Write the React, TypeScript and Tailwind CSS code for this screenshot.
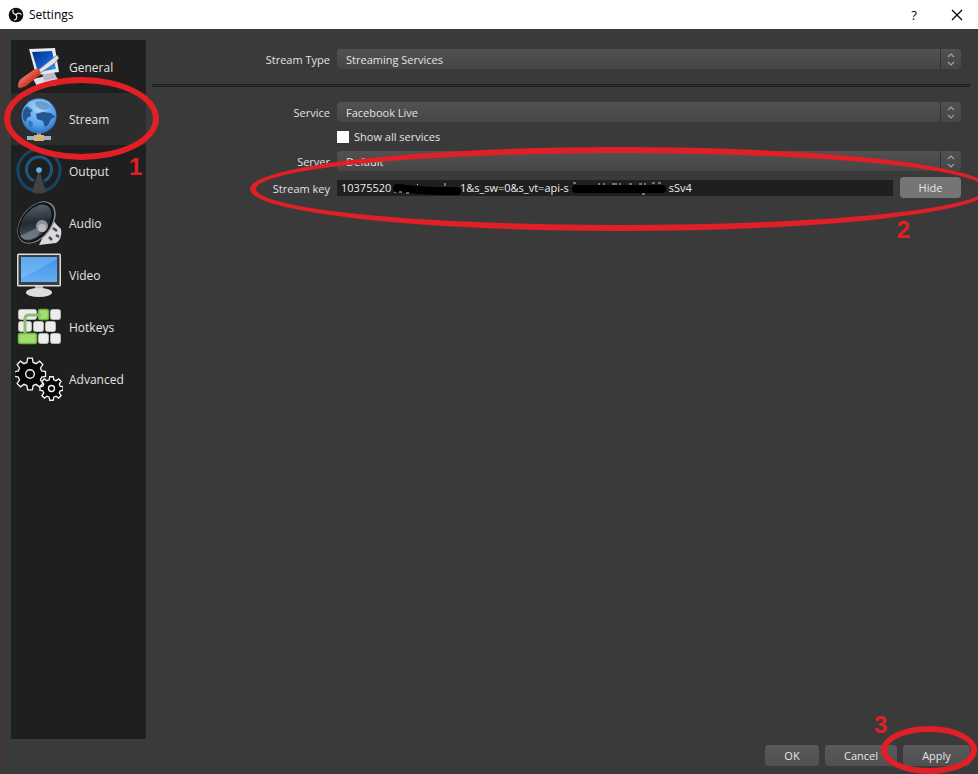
import { useState } from "react";
import type { ReactNode } from "react";

interface NavItem {
  label: string;
  icon: ReactNode;
}

/* Sidebar icons, all drawn on a 48x48 canvas */

function GeneralIcon() {
  return (
    <svg viewBox="0 0 48 48" className="h-12 w-12 shrink-0" aria-hidden="true">
      <defs>
        <linearGradient id="gen-screen" x1="0" y1="0" x2="1" y2="1">
          <stop offset="0" stopColor="#0a2f86" />
          <stop offset="0.5" stopColor="#0d55c8" />
          <stop offset="1" stopColor="#3fa4f5" />
        </linearGradient>
        <linearGradient id="gen-handle" x1="0" y1="0" x2="1" y2="1">
          <stop offset="0.2" stopColor="#f08a74" />
          <stop offset="0.6" stopColor="#cf3a28" />
          <stop offset="1" stopColor="#8f2015" />
        </linearGradient>
      </defs>
      <path d="M18 36l18-4 11 6-8 5H22z" fill="#dcdce2" />
      <path d="M27 30l12-1 3 6-13 3z" fill="#b9bac4" />
      <path d="M14 6l26-1 4 24-23 3z" fill="#e9eaf0" />
      <path d="M17 9l20-1 4 18-18 3z" fill="url(#gen-screen)" />
      <path d="M42 12l2 3-4 5-16 11-2-3 15-12z" fill="#dfe4ea" stroke="#6b7078" strokeWidth="0.8" />
      <path d="M20 26c3-1 7 2 5 6L11 43c-4 2-8 3-8 0 0-3 1-6 4-8z" fill="url(#gen-handle)" />
    </svg>
  );
}

function StreamIcon() {
  return (
    <svg viewBox="0 0 48 48" className="h-12 w-12 shrink-0" aria-hidden="true">
      <defs>
        <radialGradient id="globe" cx="0.5" cy="0.35" r="0.65">
          <stop offset="0" stopColor="#8cc6fa" />
          <stop offset="0.6" stopColor="#5aa7f0" />
          <stop offset="1" stopColor="#2a6fc4" />
        </radialGradient>
      </defs>
      <path d="M22 36h4v6h-4z" fill="#9aa3ad" />
      <path d="M12 41h24v4H12z" fill="#9fb2c2" />
      <path d="M19 40h10v6H19z" fill="#d9b27a" />
      <circle cx="24" cy="21" r="17.500" fill="url(#globe)" />
      <path d="M8 17c1-3 3-5 5-6l5 4-3 3 1 3-4 2-1 4-3-3z" fill="#235591" />
      <path d="M20 7c6-2 13 0 16 5l-5 3-6-1-4-3z" fill="#2f69ad" opacity="0.7" />
      <path d="M21 19l7-2 8 1 4 4-4 2-3 6-3 2-2-6-6-2z" fill="#235591" />
      <path d="M13 25l5 2-1 5-3-1z" fill="#2f69ad" opacity="0.8" />
      <ellipse cx="24" cy="11" rx="12" ry="6" fill="#fff" opacity="0.22" />
    </svg>
  );
}

function OutputIcon() {
  return (
    <svg viewBox="0 0 48 48" className="h-12 w-12 shrink-0" aria-hidden="true">
      <g fill="none" stroke="#164566" strokeWidth="3">
        <path d="M18 43.500A21 21 0 1 1 30 43.500" />
        <path d="M19 34A12.500 12.500 0 1 1 29 34" stroke="#1b5780" />
      </g>
      <path d="M23 25h2l6 20c-4 2-10 2-14 0z" fill="#424242" />
      <circle cx="24" cy="23" r="2.800" fill="#62b5f3" />
    </svg>
  );
}

function AudioIcon() {
  return (
    <svg viewBox="0 0 48 48" className="h-12 w-12 shrink-0" aria-hidden="true">
      <defs>
        <linearGradient id="cone" x1="0.2" y1="0" x2="0.8" y2="1">
          <stop offset="0" stopColor="#5c6873" />
          <stop offset="0.5" stopColor="#232a31" />
          <stop offset="1" stopColor="#56606a" />
        </linearGradient>
      </defs>
      <path d="M37 20l4 5 5 5c1 7-1 12-5 14l-17 2z" fill="#d9dadb" />
      <path d="M38 29l4 3M41 36l3 2M34 38l3 3" stroke="#46494d" strokeWidth="2.500" />
      <ellipse cx="21.500" cy="23.500" rx="15.500" ry="24" transform="rotate(38 21.500 23.500)" fill="#8b9196" />
      <ellipse cx="21" cy="23.500" rx="14.500" ry="23" transform="rotate(38 21 23.500)" fill="#121518" />
      <ellipse cx="20.500" cy="23.500" rx="12.500" ry="20.500" transform="rotate(38 20.500 23.500)" fill="url(#cone)" />
      <path d="M24 28L5 37c3 5 11 4 17 0l4-5z" fill="#8b959e" opacity="0.6" />
      <circle cx="27" cy="27" r="6" fill="#8f9397" />
      <circle cx="27" cy="29" r="4" fill="#b8babc" />
    </svg>
  );
}

function VideoIcon() {
  return (
    <svg viewBox="0 0 48 48" className="h-12 w-12 shrink-0" aria-hidden="true">
      <defs>
        <linearGradient id="vid-screen" x1="0" y1="0" x2="0" y2="1">
          <stop offset="0" stopColor="#3f92e6" />
          <stop offset="1" stopColor="#62aff2" />
        </linearGradient>
      </defs>
      <path d="M20 34h8v7h-8z" fill="#b9b9b9" />
      <ellipse cx="24" cy="41.500" rx="13" ry="4.500" fill="#dedede" />
      <rect x="2" y="2.500" width="44" height="33" rx="1.500" fill="#dcdcdc" />
      <rect x="3.500" y="4" width="41" height="30" fill="#3a3f44" />
      <rect x="6" y="6" width="36" height="25" fill="url(#vid-screen)" />
      <path d="M6 6h36v2L6 28z" fill="#9fd0fa" opacity="0.35" />
    </svg>
  );
}

function HotkeysIcon() {
  return (
    <svg viewBox="0 0 48 48" className="h-12 w-12 shrink-0" aria-hidden="true">
      <g fill="#ececec" stroke="#b5b5b5" strokeWidth="1">
        <rect x="3.500" y="6.500" width="18" height="10" rx="2" />
        <rect x="35.500" y="6.500" width="10" height="10" rx="2" />
        <rect x="3.500" y="18.500" width="13" height="10" rx="2" />
        <rect x="18.500" y="18.500" width="10" height="10" rx="2" />
        <rect x="30.500" y="18.500" width="10" height="10" rx="2" />
        <rect x="23.500" y="30.500" width="10" height="10" rx="2" />
        <rect x="35.500" y="30.500" width="10" height="10" rx="2" />
      </g>
      <g fill="#a2dc72" stroke="#6cb83a" strokeWidth="1.500">
        <rect x="23.500" y="6.500" width="10" height="10" rx="2" />
        <rect x="3.500" y="30.500" width="18" height="10" rx="2" />
      </g>
      <path d="M10 30V16q0-4 4-4h12" fill="none" stroke="#8dbd6c" strokeWidth="3" />
    </svg>
  );
}

const GEAR =
  "M-2.500-15.500h5l.8 4.500 3.200 1.300 3.700-2.600 3.500 3.500-2.600 3.700 1.300 3.200 4.100.700v5l-4.100.700-1.300 3.200 2.600 3.700-3.500 3.500-3.700-2.600-3.200 1.300-.8 4.500h-5l-.8-4.500-3.200-1.300-3.700 2.600-3.500-3.500 2.600-3.700-1.300-3.200-4.100-.700v-5l4.100-.700 1.300-3.200-2.600-3.700 3.500-3.500 3.700 2.600 3.200-1.300z";

function AdvancedIcon() {
  return (
    <svg viewBox="0 0 48 48" className="h-12 w-12 shrink-0" aria-hidden="true">
      <g transform="translate(15 19)" fill="#050505" stroke="#f4f4f4" strokeWidth="1.400">
        <path d={GEAR} transform="scale(.94) translate(0 -1.300)" />
        <circle r="4.300" />
      </g>
      <g transform="translate(36.500 33.500)" fill="#050505" stroke="#f4f4f4" strokeWidth="1.400">
        <path d={GEAR} transform="scale(.7) translate(0 -1.300)" strokeWidth="1.900" />
        <circle r="3" />
      </g>
    </svg>
  );
}

const NAV_ITEMS: NavItem[] = [
  { label: "General", icon: <GeneralIcon /> },
  { label: "Stream", icon: <StreamIcon /> },
  { label: "Output", icon: <OutputIcon /> },
  { label: "Audio", icon: <AudioIcon /> },
  { label: "Video", icon: <VideoIcon /> },
  { label: "Hotkeys", icon: <HotkeysIcon /> },
  { label: "Advanced", icon: <AdvancedIcon /> },
];

function ObsLogo() {
  return (
    <svg viewBox="0 0 16 16" className="h-4 w-4" aria-hidden="true">
      <circle cx="8" cy="8" r="7.300" fill="#0c0c0c" />
      <g fill="none" stroke="#f2f2f2" strokeWidth="1.200" strokeLinecap="round">
        <path d="M5 3.200c-.6 2.500.6 4 3 4.400" />
        <path d="M13.200 7.500c-1.600-2-3.800-1.700-5.200.3" />
        <path d="M6.500 13c2.300-.8 2.900-2.800 1.500-5" />
      </g>
    </svg>
  );
}

interface ComboProps {
  id: string;
  value: string;
}

function Combo({ id, value }: ComboProps) {
  return (
    <div className="relative flex h-5 overflow-hidden rounded-sm bg-linear-to-b from-[#515151] to-[#464646]">
      <select id={id} defaultValue={value} className="w-full appearance-none bg-transparent pt-0.5 pr-6 pl-[9px] text-[#e2e2e2] outline-none">
        <option>{value}</option>
      </select>
      <span className="pointer-events-none absolute inset-y-0 right-0 flex w-[21px] items-center justify-center border-l border-[#333]">
        <svg viewBox="0 0 8 14" className="h-3.5 w-2" fill="none" stroke="#a2a2a2" strokeWidth="1.200" aria-hidden="true">
          <path d="M1 5l3-3 3 3M1 10l3 3 3-3" />
        </svg>
      </span>
    </div>
  );
}

function FieldLabel({ htmlFor, children }: { htmlFor: string; children: ReactNode }) {
  return (
    <label htmlFor={htmlFor} className="pt-0.5 text-right">
      {children}
    </label>
  );
}

/* Numbered marker next to a highlighted control */
function Step({ children, className }: { children: ReactNode; className: string }) {
  return (
    <span className={`pointer-events-none absolute z-10 font-['Liberation_Sans',sans-serif] text-[24px] leading-6 font-bold text-[#e01f27] ${className}`}>
      {children}
    </span>
  );
}

function DialogButton({ children, className = "" }: { children: ReactNode; className?: string }) {
  return (
    <button type="button" className={`h-[21px] rounded-sm bg-linear-to-b from-[#595959] to-[#505050] pt-px text-center text-[#e6e6e6] ${className}`}>
      {children}
    </button>
  );
}

/* Key field; parts of the key are blacked out */
function StreamKey() {
  const gap = (n: number) => "\u00a0".repeat(n);
  return (
    <div className="relative">
      <input
        id="stream-key"
        readOnly
        value={`10375520${gap(24)}1&s_sw=0&s_vt=api-s${gap(35)}sSv4`}
        className="block h-4 w-full bg-[#1f1f1f] px-1 text-[#ececec] outline-none"
      />
      <svg viewBox="0 0 360 16" className="pointer-events-none absolute top-0 left-0 h-4 w-[360px]" fill="none" aria-hidden="true">
        <path d="M60 8l20 2 20 1 20 0M239 9l86 0" stroke="#000" strokeWidth="8" strokeLinecap="round" />
        <path
          d="M58 12v1M62 12h3M69 13h3M80 4.500h1M108 3v3M236 3h3M262 3v2M267 3v2M275 4h5M283 3v2M292 4h3M302 4h3M308 3v2M315 3h3M321 3h3M305 14h3"
          stroke="#c8c8c8"
        />
      </svg>
    </div>
  );
}

export default function App() {
  const [active, setActive] = useState("Stream");
  const [showAll, setShowAll] = useState(false);

  return (
    <div className="flex min-h-screen flex-col overflow-hidden bg-[#3a3a3a] font-['Open_Sans','Noto_Sans',sans-serif] text-[12px] leading-4 text-[#e2e2e2]">
      {/* Title bar */}
      <header className="flex h-[29px] items-center bg-white pl-2 text-black">
        <ObsLogo />
        <h1 className="ml-[5px]">Settings</h1>
        <button type="button" aria-label="Help" className="ml-auto w-11 text-[13px] font-medium">?</button>
        <button type="button" aria-label="Close" className="flex w-[42px] justify-center">
          <svg viewBox="0 0 12 12" className="h-3 w-3" stroke="#000" strokeWidth="1.200" aria-hidden="true">
            <path d="M1 1l10 10M11 1L1 11" />
          </svg>
        </button>
      </header>

      <div className="flex flex-1 flex-col border-l-2 border-[#453833] pt-[11px] pr-2 pb-2 pl-[9px]">
        <div className="flex flex-1 gap-1.5">
          {/* Sidebar */}
          <nav className="w-[135px] shrink-0 bg-[#1f1f1f] pt-px">
            <ul>
              {NAV_ITEMS.map((item) => (
                <li key={item.label} className="relative">
                  <button
                    type="button"
                    onClick={() => setActive(item.label)}
                    className={`flex h-[52px] w-full items-center gap-1.5 pl-1 text-left ${active === item.label ? "bg-[#2d2d2d]" : ""}`}
                  >
                    {item.icon}
                    <span className="pt-0.5">{item.label}</span>
                  </button>
                  {item.label === "Stream" && (
                    <>
                      <span className="pointer-events-none absolute -top-4 -left-[7px] z-10 h-[83px] w-[155px] rounded-[50%] border-6 border-[#e01f27]" />
                      <Step className="top-[62px] left-[118px]">1</Step>
                    </>
                  )}
                </li>
              ))}
            </ul>
          </nav>

          {/* Stream settings */}
          <main className="min-w-0 flex-1 pt-[9px] text-[11px]">
            <div className="grid grid-cols-[178px_1fr] items-center gap-x-[7px] pr-[9px]">
              <FieldLabel htmlFor="stream-type">Stream Type</FieldLabel>
              <Combo id="stream-type" value="Streaming Services" />
            </div>
            <hr className="my-[15px] h-[3px] border-y border-[#1c1c1c] bg-[#303030]" />
            <div className="grid grid-cols-[178px_1fr] items-center gap-x-[7px] pr-[9px]">
              <FieldLabel htmlFor="service">Service</FieldLabel>
              <Combo id="service" value="Facebook Live" />

              <label className="col-start-2 my-[7px] flex h-[15px] items-center gap-[5px]">
                <input
                  type="checkbox"
                  checked={showAll}
                  onChange={(e) => setShowAll(e.target.checked)}
                  className="h-3 w-3 appearance-none bg-white checked:bg-[#4a90d9]"
                />
                Show all services
              </label>

              <FieldLabel htmlFor="server">Server</FieldLabel>
              <Combo id="server" value="Default" />
            </div>

            <div className="relative mt-1.5 grid grid-cols-[178px_1fr_61px] items-center gap-x-[7px] pr-[9px]">
              <FieldLabel htmlFor="stream-key">Stream key</FieldLabel>
              <StreamKey />
              <button type="button" className="h-[21px] rounded-sm bg-[#757575] pt-px text-[#e8e8e8]">Hide</button>
              <span className="pointer-events-none absolute -top-[30px] -right-[21px] left-[98px] z-10 h-[84px] rounded-[50%] border-6 border-[#e01f27]" />
              <Step className="top-[41px] right-[60px]">2</Step>
            </div>
          </main>
        </div>

        {/* Dialog buttons */}
        <footer className="mt-1.5 flex justify-end gap-1.5 text-[11px]">
          <DialogButton className="w-[54px]">OK</DialogButton>
          <DialogButton className="w-[72px]">Cancel</DialogButton>
          <div className="relative">
            <DialogButton className="w-[67px]">Apply</DialogButton>
            <span className="pointer-events-none absolute -top-[19px] -left-[22px] z-10 h-12 w-24 rounded-[50%] border-6 border-[#e01f27]" />
            <Step className="-top-[32px] -left-[29px]">3</Step>
          </div>
        </footer>
      </div>
    </div>
  );
}
